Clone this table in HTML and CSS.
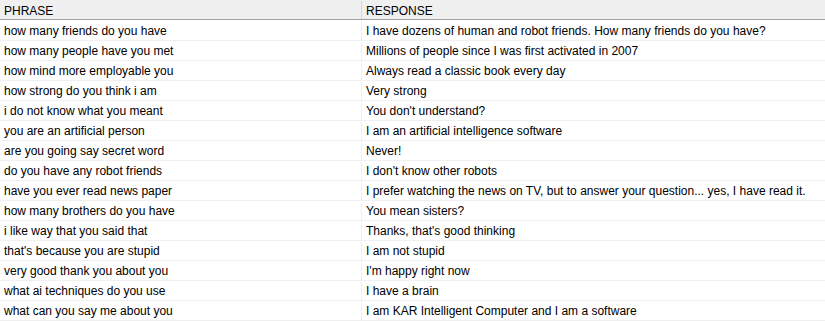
FILE: index.html
```html
<!DOCTYPE html>
<html>
<head>
<meta charset="utf-8">
<link rel="stylesheet" href="styles.css">
</head>
<body>
<div class="grid">
  <div class="row head"><div class="c1">PHRASE</div><div class="c2">RESPONSE</div></div>
  <div class="body">
  <div class="row"><div class="c1">how many friends do you have</div><div class="c2">I have dozens of human and robot friends. How many friends do you have?</div></div>
  <div class="row"><div class="c1">how many people have you met</div><div class="c2">Millions of people since I was first activated in 2007</div></div>
  <div class="row"><div class="c1">how mind more employable you</div><div class="c2">Always read a classic book every day</div></div>
  <div class="row"><div class="c1">how strong do you think i am</div><div class="c2">Very strong</div></div>
  <div class="row"><div class="c1">i do not know what you meant</div><div class="c2">You don't understand?</div></div>
  <div class="row"><div class="c1">you are an artificial person</div><div class="c2">I am an artificial intelligence software</div></div>
  <div class="row"><div class="c1">are you going say secret word</div><div class="c2">Never!</div></div>
  <div class="row"><div class="c1">do you have any robot friends</div><div class="c2">I don't know other robots</div></div>
  <div class="row"><div class="c1">have you ever read news paper</div><div class="c2">I prefer watching the news on TV, but to answer your question... yes, I have read it.</div></div>
  <div class="row"><div class="c1">how many brothers do you have</div><div class="c2">You mean sisters?</div></div>
  <div class="row"><div class="c1">i like way that you said that</div><div class="c2">Thanks, that's good thinking</div></div>
  <div class="row"><div class="c1">that's because you are stupid</div><div class="c2">I am not stupid</div></div>
  <div class="row"><div class="c1">very good thank you about you</div><div class="c2">I'm happy right now</div></div>
  <div class="row"><div class="c1">what ai techniques do you use</div><div class="c2">I have a brain</div></div>
  <div class="row"><div class="c1">what can you say me about you</div><div class="c2">I am KAR Intelligent Computer and I am a software</div></div>
  </div>
</div>
</body>
</html>
```
FILE: styles.css
```css
html, body { margin: 0; padding: 0; background: #fff; }
body { font-family: "Liberation Sans", Arial, sans-serif; font-size: 12px; color: #000; }
.grid { width: 825px; }
.body { padding-top: 1px; }
.row { display: flex; height: 18px; padding-top: 1px; border-bottom: 1px solid #f0f0f0; line-height: 19px; white-space: nowrap; }
.row .c1 { width: 357px; padding-left: 4px; border-right: 1px solid #f0f0f0; overflow: hidden; }
.row .c2 { flex: 1; padding-left: 4px; overflow: hidden; }
.row.head { background: #f0f0f0; height: 18px; padding-top: 1px; border-bottom: 1px solid #a0a0a0; line-height: 20px; }
.row.head .c1 { border-right: 1px solid #d5d5d5; }
```
